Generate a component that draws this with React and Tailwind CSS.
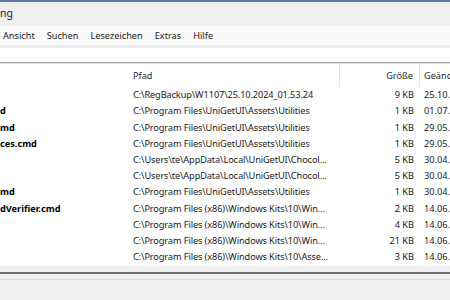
import React from "react";

const rows = [
  { name: "", path: "C:\\RegBackup\\W1107\\25.10.2024_01.53.24", size: "9 KB", date: "25.10.2024 01:53" },
  { name: "d", path: "C:\\Program Files\\UniGetUI\\Assets\\Utilities", size: "1 KB", date: "01.07.2024 12:10" },
  { name: "md", path: "C:\\Program Files\\UniGetUI\\Assets\\Utilities", size: "1 KB", date: "29.05.2024 09:41" },
  { name: "ces.cmd", path: "C:\\Program Files\\UniGetUI\\Assets\\Utilities", size: "1 KB", date: "29.05.2024 09:41" },
  { name: "", path: "C:\\Users\\te\\AppData\\Local\\UniGetUI\\Chocol...", size: "5 KB", date: "30.04.2024 18:22" },
  { name: "", path: "C:\\Users\\te\\AppData\\Local\\UniGetUI\\Chocol...", size: "5 KB", date: "30.04.2024 18:22" },
  { name: "md", path: "C:\\Program Files\\UniGetUI\\Assets\\Utilities", size: "1 KB", date: "30.04.2024 18:22" },
  { name: "dVerifier.cmd", path: "C:\\Program Files (x86)\\Windows Kits\\10\\Win...", size: "2 KB", date: "14.06.2024 07:30" },
  { name: "", path: "C:\\Program Files (x86)\\Windows Kits\\10\\Win...", size: "4 KB", date: "14.06.2024 07:30" },
  { name: "", path: "C:\\Program Files (x86)\\Windows Kits\\10\\Win...", size: "21 KB", date: "14.06.2024 07:30" },
  { name: "", path: "C:\\Program Files (x86)\\Windows Kits\\10\\Asse...", size: "3 KB", date: "14.06.2024 07:30" },
];

const menu = ["Ansicht", "Suchen", "Lesezeichen", "Extras", "Hilfe"];

export default function App() {
  return (
    <div
      className="w-[450px] h-[300px] overflow-hidden bg-white text-[9.2px] text-[#1a1a1a] flex flex-col"
      style={{ fontFamily: '"Noto Sans", "Open Sans", sans-serif' }}
    >
      <div className="h-[2px] bg-[#5a7ca3] shrink-0" />
      <div className="h-[24px] bg-[#f0f0f0] flex items-center shrink-0">
        <span className="text-[10.5px]">ng</span>
      </div>
      <div className="h-[19px] bg-[#fafafa] flex items-center gap-[12px] pl-[3px] shrink-0">
        {menu.map((m) => (
          <span key={m}>{m}</span>
        ))}
      </div>
      <div className="h-[3px] bg-[#ebebeb] shrink-0" />
      <div className="h-[14px] bg-white shrink-0" />
      <div className="h-px bg-[#a8a8a8] shrink-0" />
      <div className="h-px bg-[#e2e2e2] shrink-0" />

      <div className="flex-1 flex flex-col min-h-0">
        <div className="h-[23px] flex items-stretch shrink-0 text-[#2a2a2a]">
          <div className="w-[128px] shrink-0" />
          <div className="w-[212px] shrink-0 pl-[5px] flex items-center border-r border-[#e5e5e5]">
            Pfad
          </div>
          <div className="w-[80px] shrink-0 pr-[6px] flex items-center justify-end border-r border-[#e5e5e5]">
            Größe
          </div>
          <div className="flex-1 pl-[4px] flex items-center whitespace-nowrap overflow-hidden">
            Geändert am
          </div>
        </div>
        <div className="flex flex-col">
          {rows.map((r, i) => (
            <div key={i} className="h-[16.2px] flex items-center whitespace-nowrap">
              <div className="w-[128px] shrink-0 font-bold text-black overflow-hidden">{r.name}</div>
              <div className="w-[212px] shrink-0 pl-[5px] tracking-[-0.1px]">{r.path}</div>
              <div className="w-[80px] shrink-0 pr-[6px] text-right">{r.size}</div>
              <div className="flex-1 pl-[4px] overflow-hidden">{r.date}</div>
            </div>
          ))}
        </div>
      </div>

      <div className="h-[6px] bg-[#f0f0f0] shrink-0" />
      <div className="h-[2px] bg-[#6e6e6e] shrink-0" />
      <div className="h-[5px] bg-[#f0f0f0] shrink-0" />
      <div className="h-px bg-[#d9d9d9] shrink-0" />
      <div className="h-[20px] bg-[#f0f0f0] shrink-0" />
    </div>
  );
}
